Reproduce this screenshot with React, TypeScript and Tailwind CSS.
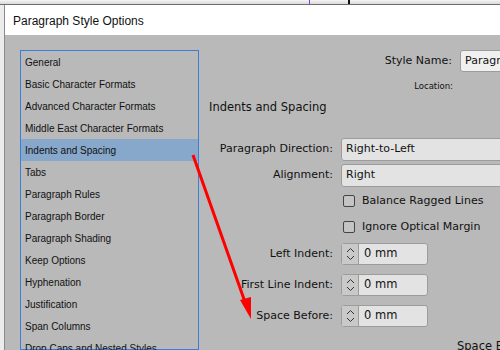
import React from "react";

const sections = [
  "General",
  "Basic Character Formats",
  "Advanced Character Formats",
  "Middle East Character Formats",
  "Indents and Spacing",
  "Tabs",
  "Paragraph Rules",
  "Paragraph Border",
  "Paragraph Shading",
  "Keep Options",
  "Hyphenation",
  "Justification",
  "Span Columns",
  "Drop Caps and Nested Styles",
];

const font = { fontFamily: '"DejaVu Sans", "Noto Sans", sans-serif' };
const listFont = { fontFamily: '"Liberation Sans", Arial, sans-serif' };

function Spinner({ value }: { value: string }) {
  return (
    <div className="flex h-[22px] w-[87px] rounded-[3px] border border-[#9c9c9c] bg-[#e3e3e3]">
      <div className="flex w-[17px] flex-col items-center justify-center border-r border-[#9c9c9c] bg-[#c9c9c9]">
        <svg width="9" height="16" viewBox="0 0 9 16" fill="none" stroke="#333" strokeWidth="1">
          <path d="M1 6 L4.5 2.5 L8 6" />
          <path d="M1 10 L4.5 13.5 L8 10" />
        </svg>
      </div>
      <div className="flex items-center pl-[5px] text-[11.5px] text-[#111]">{value}</div>
    </div>
  );
}

function Checkbox({ label }: { label: string }) {
  return (
    <div className="flex h-[26px] items-center gap-[7px]">
      <div className="ml-[2px] h-[12px] w-[12px] rounded-[2px] border border-[#444] bg-[#c4c4c4]" />
      <span className="text-[11px] text-[#111]">{label}</span>
    </div>
  );
}

function Select({ value }: { value: string }) {
  return (
    <div className="flex h-[23px] w-[200px] items-center rounded-[3px] border border-[#9c9c9c] bg-[#e3e3e3] pl-[4px] text-[11px] text-[#111]">
      {value}
    </div>
  );
}

export default function App() {
  return (
    <div className="relative h-[350px] w-[500px] overflow-hidden bg-[#ececec]" style={font}>
      <div className="flex h-[5px] border-b border-[#6d6d6d] bg-gradient-to-b from-[#f4f4f4] to-[#d9d9d9]">
        <div className="w-[309px]" />
        <div className="w-px bg-[#8a3dd6]" />
        <div className="w-[38px]" />
        <div className="w-[2px] bg-[#111]" />
      </div>
      <div className="ml-[4px] flex h-[345px] flex-col border-l border-[#8a8a8a]">
        <div
          className="flex h-[30px] shrink-0 items-center bg-white pl-[8px] pt-[1px] text-[12px] text-[#111]"
          style={listFont}
        >
          Paragraph Style Options
        </div>
        <div className="flex min-h-0 flex-1 gap-[10px] overflow-hidden bg-[#b9b9b9] pl-[15px] pt-[15px]">
          <div className="w-[179px] shrink-0 border border-[#3a7fdc]" style={listFont}>
            {sections.map((s) => (
              <div
                key={s}
                className={
                  "flex h-[22px] items-center pl-[4px] text-[10px] text-[#111] " +
                  (s === "Indents and Spacing" ? "bg-[#87a7cb]" : "")
                }
              >
                {s}
              </div>
            ))}
          </div>
          <div className="flex w-[420px] shrink-0 flex-col">
            <div className="flex h-[22px] items-center gap-[8px]">
              <div className="w-[243px] text-right text-[11px] text-[#111]">Style Name:</div>
              <div className="flex h-[22px] w-[120px] items-center rounded-[3px] border border-[#9c9c9c] bg-[#f0f0f0] pl-[4px] text-[11px] text-[#111]">
                Paragraph Style 1
              </div>
            </div>
            <div className="mt-[8px] flex h-[12px] items-center">
              <div className="w-[244px] text-right text-[8.5px] text-[#111]">Location:</div>
            </div>
            <div className="mt-[7px] h-[16px] text-[11.5px] leading-[16px] text-[#111]">Indents and Spacing</div>
            <div className="mt-[7px] h-px bg-[#a6a6a6]" />
            <div className="mt-[16px] grid grid-cols-[124px_auto] items-center gap-x-[8px]">
              <div className="text-right text-[11px] text-[#111]">Paragraph Direction:</div>
              <Select value="Right-to-Left" />
              <div className="mt-[3px] text-right text-[11px] text-[#111]">Alignment:</div>
              <div className="mt-[3px]">
                <Select value="Right" />
              </div>
              <div />
              <div className="mt-[1px]">
                <Checkbox label="Balance Ragged Lines" />
              </div>
              <div />
              <Checkbox label="Ignore Optical Margin" />
              <div className="mt-[3px] text-right text-[11px] text-[#111]">Left Indent:</div>
              <div className="mt-[3px]">
                <Spinner value="0 mm" />
              </div>
              <div className="mt-[9px] text-right text-[11px] text-[#111]">First Line Indent:</div>
              <div className="mt-[9px]">
                <Spinner value="0 mm" />
              </div>
              <div className="mt-[9px] text-right text-[11px] text-[#111]">Space Before:</div>
              <div className="mt-[9px]">
                <Spinner value="0 mm" />
              </div>
            </div>
            <div className="mt-[11px] flex">
              <div className="w-[248px]" />
              <div className="text-[11.5px] leading-[16px] text-[#111]">Space Before Line</div>
            </div>
          </div>
        </div>
      </div>
      <svg className="pointer-events-none absolute left-0 top-0" width="500" height="350">
        <line x1="193" y1="155" x2="245" y2="302" stroke="#ff0000" strokeWidth="3" />
        <polygon points="240,300 251,297 251,319" fill="#ff0000" />
      </svg>
    </div>
  );
}
